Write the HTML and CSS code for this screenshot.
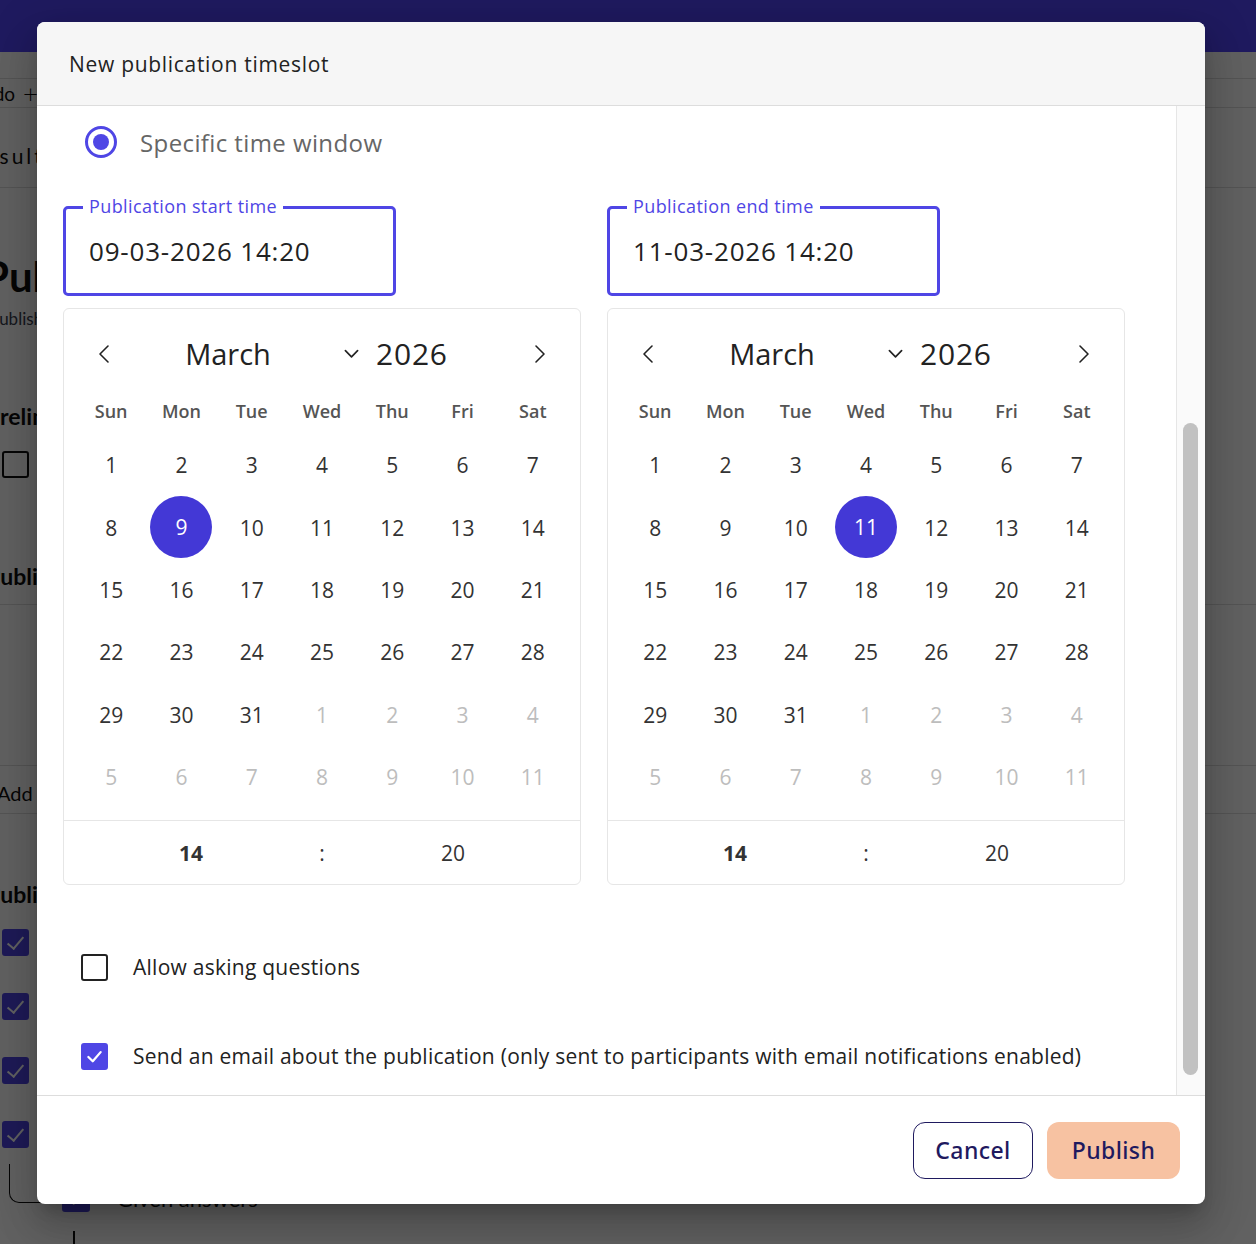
FILE: index.html
```html
<!DOCTYPE html>
<html lang="en">

<head>
  <meta charset="UTF-8">
  <meta name="viewport" content="width=device-width, initial-scale=1.0">
  <title>Publications</title>
  <link rel="stylesheet" href="styles.css">
</head>

<body>
  <!-- page behind the dialog -->
  <div class="page">
    <div class="topbar"></div>
    <div class="tabs"><span class="tab">Todo</span><span class="tab-add">+</span></div>
    <div class="subnav">Results</div>
    <h1 class="page-title">Publications</h1>
    <p class="page-sub">Publish results to participants</p>
    <h2 class="sec-title sec-prelim">Preliminary results</h2>
    <span class="bg-check"></span>
    <h2 class="sec-title sec-pub">Publication timeslots</h2>
    <div class="bg-table"></div>
    <div class="bg-table-foot">Add timeslot</div>
    <h2 class="sec-title sec-items">Published items</h2>
    <ul class="bg-list">
      <li><span class="bg-check on"></span></li>
      <li><span class="bg-check on"></span></li>
      <li><span class="bg-check on"></span></li>
      <li><span class="bg-check on"></span></li>
    </ul>
    <div class="bg-tree">
      <span class="bg-branch"></span>
      <span class="bg-check on small"></span>
      <span class="bg-tree-label">Given answers</span>
    </div>
    <span class="bg-stem"></span>
  </div>

  <div class="backdrop"></div>

  <div class="modal">
    <div class="modal-head">New publication timeslot</div>

    <div class="modal-body">
      <div class="modal-content">
        <label class="radio-row">
          <span class="radio"></span>
          <span class="radio-text">Specific time window</span>
        </label>

        <div class="pickers">
          <div class="field">
            <span class="field-label">Publication start time</span>
            <span class="field-value">09-03-2026 14:20</span>
          </div>
          <div class="field">
            <span class="field-label">Publication end time</span>
            <span class="field-value">11-03-2026 14:20</span>
          </div>

          <div class="cal">
            <div class="cal-head">
              <span class="cal-nav"><svg viewBox="0 0 24 24"><path d="M15 4 L7 12 L15 20" /></svg></span>
              <span class="cal-month">March</span>
              <span class="cal-caret"><svg viewBox="0 0 16 10"><path d="M1.5 1.5 L8 8 L14.5 1.5" /></svg></span>
              <span class="cal-year">2026</span>
              <span class="cal-space"></span>
              <span class="cal-nav"><svg viewBox="0 0 24 24"><path d="M9 4 L17 12 L9 20" /></svg></span>
            </div>
            <div class="cal-week">
              <span>Sun</span><span>Mon</span><span>Tue</span><span>Wed</span><span>Thu</span><span>Fri</span><span>Sat</span>
            </div>
            <div class="cal-days">
              <span>1</span><span>2</span><span>3</span><span>4</span><span>5</span><span>6</span><span>7</span>
              <span>8</span><span class="sel">9</span><span>10</span><span>11</span><span>12</span><span>13</span><span>14</span>
              <span>15</span><span>16</span><span>17</span><span>18</span><span>19</span><span>20</span><span>21</span>
              <span>22</span><span>23</span><span>24</span><span>25</span><span>26</span><span>27</span><span>28</span>
              <span>29</span><span>30</span><span>31</span><span class="out">1</span><span class="out">2</span><span class="out">3</span><span class="out">4</span>
              <span class="out">5</span><span class="out">6</span><span class="out">7</span><span class="out">8</span><span class="out">9</span><span class="out">10</span><span class="out">11</span>
            </div>
            <div class="cal-time">
              <span class="hour">14</span><span>:</span><span>20</span>
            </div>
          </div>

          <div class="cal">
            <div class="cal-head">
              <span class="cal-nav"><svg viewBox="0 0 24 24"><path d="M15 4 L7 12 L15 20" /></svg></span>
              <span class="cal-month">March</span>
              <span class="cal-caret"><svg viewBox="0 0 16 10"><path d="M1.5 1.5 L8 8 L14.5 1.5" /></svg></span>
              <span class="cal-year">2026</span>
              <span class="cal-space"></span>
              <span class="cal-nav"><svg viewBox="0 0 24 24"><path d="M9 4 L17 12 L9 20" /></svg></span>
            </div>
            <div class="cal-week">
              <span>Sun</span><span>Mon</span><span>Tue</span><span>Wed</span><span>Thu</span><span>Fri</span><span>Sat</span>
            </div>
            <div class="cal-days">
              <span>1</span><span>2</span><span>3</span><span>4</span><span>5</span><span>6</span><span>7</span>
              <span>8</span><span>9</span><span>10</span><span class="sel">11</span><span>12</span><span>13</span><span>14</span>
              <span>15</span><span>16</span><span>17</span><span>18</span><span>19</span><span>20</span><span>21</span>
              <span>22</span><span>23</span><span>24</span><span>25</span><span>26</span><span>27</span><span>28</span>
              <span>29</span><span>30</span><span>31</span><span class="out">1</span><span class="out">2</span><span class="out">3</span><span class="out">4</span>
              <span class="out">5</span><span class="out">6</span><span class="out">7</span><span class="out">8</span><span class="out">9</span><span class="out">10</span><span class="out">11</span>
            </div>
            <div class="cal-time">
              <span class="hour">14</span><span>:</span><span>20</span>
            </div>
          </div>
        </div>

        <div class="options">
          <label class="check-row">
            <span class="check"></span>
            <span>Allow asking questions</span>
          </label>
          <label class="check-row">
            <span class="check on"><svg viewBox="0 0 24 24"><path d="M5 12.5 L10 17.5 L19 7" /></svg></span>
            <span>Send an email about the publication (only sent to participants with email notifications enabled)</span>
          </label>
        </div>
      </div>

      <div class="scrollbar"><div class="thumb"></div></div>
    </div>

    <div class="modal-foot">
      <button class="btn btn-outline">Cancel</button>
      <button class="btn btn-fill">Publish</button>
    </div>
  </div>
</body>

</html>
```

FILE: styles.css
```css
* {
  box-sizing: border-box;
}

html,
body {
  margin: 0;
  padding: 0;
}

body {
  width: 1256px;
  height: 1244px;
  overflow: hidden;
  position: relative;
  background: #fff;
  font-family: "Open Sans", "Noto Sans", sans-serif;
  color: #222;
}

/* ---------- page behind ---------- */

.page {
  font-family: "Lato", sans-serif;
  color: #111;
}

.topbar {
  height: 52px;
  background: #1f1a5f;
}

.tabs {
  margin-top: 26px;
  height: 30px;
  border-top: 1px solid #ddd;
  border-bottom: 1px solid #ddd;
  display: flex;
  align-items: center;
  gap: 8px;
  margin-left: -26px;
  font-size: 19px;
}

.tab-add {
  font-size: 26px;
  font-weight: 300;
}

.subnav {
  height: 80px;
  border-bottom: 1px solid #ddd;
  padding-top: 34px;
  margin-left: -30px;
  font-size: 21px;
  line-height: 28px;
  letter-spacing: 3px;
}

.page-title {
  margin: 64px 0 0 -17px;
  font-size: 42px;
  line-height: 48px;
  font-weight: 700;
}

.page-sub {
  margin: 9px 0 0 -11px;
  font-size: 17px;
  line-height: 20px;
  color: #3a4150;
}

.sec-title {
  margin: 0 0 0 -14px;
  font-size: 23px;
  line-height: 28px;
  font-weight: 700;
}

.sec-prelim {
  margin-top: 73px;
}

.bg-check {
  display: block;
  width: 27px;
  height: 27px;
  margin: 21px 0 0 2px;
  border: 2.5px solid #111;
  border-radius: 3px;
}

.sec-pub {
  margin-top: 84px;
}

.bg-table {
  height: 162px;
  margin-top: 14px;
  border-top: 1px solid #ddd;
  border-bottom: 1px solid #ddd;
}

.bg-table-foot {
  height: 48px;
  border-bottom: 1px solid #ddd;
  padding-top: 15px;
  margin-left: -3px;
  font-size: 20px;
  line-height: 24px;
}

.sec-items {
  margin-top: 66px;
}

.bg-list {
  list-style: none;
  margin: 21px 0 0;
  padding: 0;
}

.bg-list li {
  height: 64px;
}

.bg-list .bg-check {
  margin-top: 0;
}

.bg-check.on {
  background: #4f46e5;
  border-color: #4f46e5;
  position: relative;
}

.bg-check.on::after {
  content: '';
  position: absolute;
  left: 7px;
  top: 2px;
  width: 7px;
  height: 14px;
  border-right: 2.5px solid #fff;
  border-bottom: 2.5px solid #fff;
  transform: rotate(40deg);
}

.bg-tree {
  display: flex;
  align-items: flex-start;
  height: 66px;
  margin-top: -38px;
}

.bg-branch {
  width: 40px;
  height: 39px;
  margin: 17px 0 0 9px;
  border-left: 1.5px solid #111;
  border-bottom: 1.5px solid #111;
  border-bottom-left-radius: 10px;
}

.bg-tree .bg-check {
  margin: 37px 0 0 13px;
  width: 28px;
  height: 28px;
}

.bg-tree-label {
  margin: 38px 0 0 27px;
  font-size: 22px;
  line-height: 28px;
}

.bg-stem {
  display: block;
  width: 1.5px;
  height: 14px;
  margin: 18px 0 0 73px;
  background: #111;
}

.backdrop {
  position: absolute;
  top: 52px;
  left: 0;
  right: 0;
  bottom: 0;
  background: rgba(0, 0, 0, 0.62);
}

/* ---------- dialog ---------- */

.modal {
  position: absolute;
  left: 37px;
  top: 22px;
  width: 1168px;
  height: 1182px;
  background: #fff;
  border-radius: 8px;
  overflow: hidden;
  display: flex;
  flex-direction: column;
  box-shadow: 0 11px 15px -7px rgba(0, 0, 0, .2), 0 24px 38px 3px rgba(0, 0, 0, .14), 0 9px 46px 8px rgba(0, 0, 0, .12);
}

.modal-head {
  height: 84px;
  flex: none;
  display: flex;
  align-items: center;
  padding-left: 32px;
  background: #f6f6f6;
  border-bottom: 1px solid #ddd;
  font-size: 21px;
  font-weight: 500;
  letter-spacing: 0.7px;
  color: #222;
}

.modal-body {
  flex: 1;
  display: flex;
  min-height: 0;
}

.modal-content {
  flex: 1;
  padding: 16px 51px 0 26px;
  overflow: hidden;
}

.scrollbar {
  width: 29px;
  flex: none;
  background: #fafafa;
  border-left: 1px solid #e6e6e6;
  padding: 317px 0 0 6px;
}

.thumb {
  width: 15px;
  height: 652px;
  border-radius: 8px;
  background: #c1c1c1;
}

.radio-row {
  display: flex;
  align-items: center;
  height: 40px;
  padding-left: 22px;
  gap: 23px;
}

.radio {
  width: 32px;
  height: 32px;
  border: 3px solid #4f46e5;
  border-radius: 50%;
  display: flex;
  align-items: center;
  justify-content: center;
}

.radio::after {
  content: '';
  width: 16px;
  height: 16px;
  border-radius: 50%;
  background: #4f46e5;
}

.radio-text {
  font-size: 24px;
  letter-spacing: 0.4px;
  color: #666;
}

.pickers {
  display: grid;
  grid-template-columns: 518px 518px;
  column-gap: 26px;
  row-gap: 12px;
  margin-top: 44px;
}

.field {
  position: relative;
  width: 333px;
  height: 90px;
  border: 3px solid #4f46e5;
  border-radius: 5px;
  padding-left: 23px;
  display: flex;
  align-items: center;
}

.field-label {
  position: absolute;
  top: -13px;
  left: 17px;
  padding: 0 6px;
  background: #fff;
  font-size: 18px;
  line-height: 20px;
  letter-spacing: 0.4px;
  color: #4f46e5;
}

.field-value {
  font-size: 26px;
  letter-spacing: 0.8px;
  color: #222;
}

/* calendar card */

.cal {
  border: 1px solid #e6e6e6;
  border-radius: 6px;
}

.cal-head {
  height: 89px;
  display: flex;
  align-items: center;
  padding: 0 29px;
}

.cal-nav {
  width: 24px;
  height: 24px;
}

.cal-nav svg,
.cal-caret svg,
.check svg {
  display: block;
  width: 100%;
  height: 100%;
  fill: none;
  stroke-linecap: round;
  stroke-linejoin: round;
}

.cal-nav svg {
  stroke: #222;
  stroke-width: 1.6;
}

.cal-month {
  width: 222px;
  text-align: center;
  font-size: 29px;
  color: #222;
}

.cal-caret {
  width: 15px;
  height: 10px;
  margin-left: 5px;
}

.cal-caret svg {
  stroke: #222;
  stroke-width: 1.8;
}

.cal-year {
  margin-left: 17px;
  font-size: 30px;
  letter-spacing: 0.8px;
  color: #222;
}

.cal-space {
  flex: 1;
}

.cal-week,
.cal-days {
  display: grid;
  grid-template-columns: repeat(7, 1fr);
  padding: 0 12px;
  text-align: center;
}

.cal-week {
  height: 26px;
  align-items: center;
  font-size: 18px;
  font-weight: 600;
  color: #555;
}

.cal-days {
  margin-top: 10px;
  padding-bottom: 12px;
  grid-auto-rows: 62.4px;
  font-size: 21px;
  color: #333;
}

.cal-days span {
  display: flex;
  align-items: center;
  justify-content: center;
}

.cal-days .out {
  color: #bdbdbd;
}

.cal-days .sel {
  width: 62px;
  height: 62px;
  margin: 0 auto;
  border-radius: 50%;
  background: #4338d6;
  color: #fff;
}

.cal-time {
  height: 64px;
  border-top: 1px solid #e6e6e6;
  display: grid;
  grid-template-columns: 1fr 20px 1fr;
  padding: 0 6px;
  align-items: center;
  text-align: center;
  font-size: 21px;
  color: #333;
}

.cal-time .hour {
  font-weight: 700;
}

/* checkboxes */

.options {
  margin-top: 62px;
  padding-left: 18px;
  display: flex;
  flex-direction: column;
  gap: 49px;
}

.check-row {
  display: flex;
  align-items: center;
  height: 40px;
  gap: 25px;
  font-size: 21px;
  letter-spacing: 0.25px;
  color: #222;
}

.check {
  width: 27px;
  height: 27px;
  flex: none;
  border: 2.5px solid #222;
  border-radius: 3px;
}

.check.on {
  background: #4f46e5;
  border-color: #4f46e5;
  padding: 1px;
}

.check.on svg {
  stroke: #fff;
  stroke-width: 2.6;
}

/* footer */

.modal-foot {
  height: 109px;
  flex: none;
  border-top: 1px solid #ddd;
  display: flex;
  justify-content: flex-end;
  align-items: center;
  gap: 14px;
  padding-right: 25px;
}

.btn {
  height: 57px;
  border-radius: 12px;
  font-family: "Noto Sans", sans-serif;
  font-size: 23px;
  font-weight: 500;
  letter-spacing: 0.4px;
  color: #1f1a5f;
}

.btn-outline {
  width: 120px;
  background: #fff;
  border: 1.5px solid #1f1a5f;
}

.btn-fill {
  width: 133px;
  background: #f7c2a2;
  border: none;
}
```
